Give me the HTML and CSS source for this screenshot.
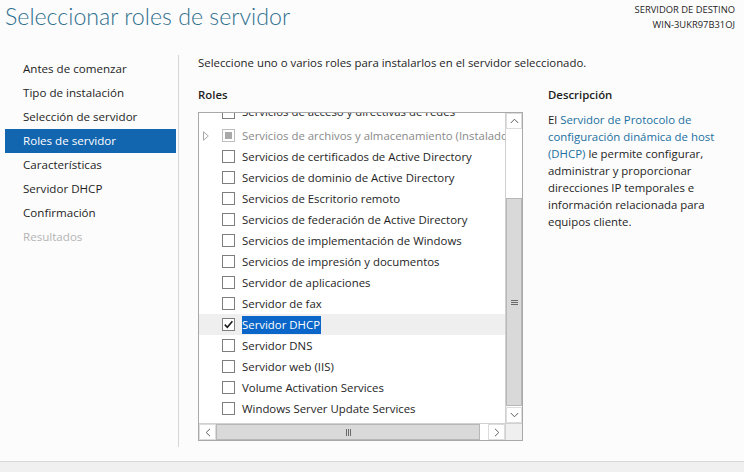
FILE: index.html
```html
<!DOCTYPE html>
<html lang="es">
<head>
<meta charset="utf-8">
<title>Seleccionar roles de servidor</title>
<link rel="stylesheet" href="styles.css">
</head>
<body>
<div class="page">
  <header class="top">
    <h1 class="title">Seleccionar roles de servidor</h1>
    <div class="dest">
      <div>SERVIDOR DE DESTINO</div>
      <div>WIN-3UKR97B31OJ</div>
    </div>
  </header>
  <div class="main">
    <nav class="nav">
      <div class="nav-item">Antes de comenzar</div>
      <div class="nav-item">Tipo de instalación</div>
      <div class="nav-item">Selección de servidor</div>
      <div class="nav-item active">Roles de servidor</div>
      <div class="nav-item">Características</div>
      <div class="nav-item">Servidor DHCP</div>
      <div class="nav-item">Confirmación</div>
      <div class="nav-item disabled">Resultados</div>
    </nav>
    <section class="content">
      <p class="intro">Seleccione uno o varios roles para instalarlos en el servidor seleccionado.</p>
      <div class="cols">
        <div class="roles">
          <h2 class="label">Roles</h2>
          <div class="listbox">
            <div class="list-area">
              <div class="viewport">
                <ul class="rows">
                  <li class="row cut"><span class="exp"></span><span class="cb"></span><span class="txt">Servicios de acceso y directivas de redes</span></li>
                  <li class="row"><span class="exp"><svg width="6" height="10" viewBox="0 0 6 10"><path d="M0.5 0.8 L5.3 5 L0.5 9.2 Z" fill="none" stroke="#a6a6a6" stroke-width="1"/></svg></span><span class="cb mixed"><span class="fill"></span></span><span class="txt muted">Servicios de archivos y almacenamiento (Instalado 2 de 12)</span></li>
                  <li class="row"><span class="exp"></span><span class="cb"></span><span class="txt">Servicios de certificados de Active Directory</span></li>
                  <li class="row"><span class="exp"></span><span class="cb"></span><span class="txt">Servicios de dominio de Active Directory</span></li>
                  <li class="row"><span class="exp"></span><span class="cb"></span><span class="txt">Servicios de Escritorio remoto</span></li>
                  <li class="row"><span class="exp"></span><span class="cb"></span><span class="txt">Servicios de federación de Active Directory</span></li>
                  <li class="row"><span class="exp"></span><span class="cb"></span><span class="txt">Servicios de implementación de Windows</span></li>
                  <li class="row"><span class="exp"></span><span class="cb"></span><span class="txt">Servicios de impresión y documentos</span></li>
                  <li class="row"><span class="exp"></span><span class="cb"></span><span class="txt">Servidor de aplicaciones</span></li>
                  <li class="row"><span class="exp"></span><span class="cb"></span><span class="txt">Servidor de fax</span></li>
                  <li class="row current"><span class="exp"></span><span class="cb"><svg width="11" height="11" viewBox="0 0 11 11"><path d="M1.8 5.6 L4.3 8.2 L9.4 2.2" fill="none" stroke="#1a1a1a" stroke-width="1.6"/></svg></span><span class="txt"><span class="sel">Servidor DHCP</span></span></li>
                  <li class="row"><span class="exp"></span><span class="cb"></span><span class="txt">Servidor DNS</span></li>
                  <li class="row"><span class="exp"></span><span class="cb"></span><span class="txt">Servidor web (IIS)</span></li>
                  <li class="row"><span class="exp"></span><span class="cb"></span><span class="txt">Volume Activation Services</span></li>
                  <li class="row"><span class="exp"></span><span class="cb"></span><span class="txt">Windows Server Update Services</span></li>
                </ul>
              </div>
              <div class="vscroll">
                <div class="sbtn"><svg width="9" height="6" viewBox="0 0 9 6"><path d="M0.8 5 L4.5 1.2 L8.2 5" fill="none" stroke="#606060" stroke-width="1"/></svg></div>
                <div class="vtrack-top"></div>
                <div class="vthumb"><svg width="7" height="7" viewBox="0 0 7 7"><path d="M0 1.5 H7 M0 3.5 H7 M0 5.5 H7" stroke="#6a6a6a" stroke-width="1"/></svg></div>
                <div class="vtrack-bottom"></div>
                <div class="sbtn"><svg width="9" height="6" viewBox="0 0 9 6"><path d="M0.8 1 L4.5 4.8 L8.2 1" fill="none" stroke="#606060" stroke-width="1"/></svg></div>
              </div>
            </div>
            <div class="hscroll">
              <div class="hbtn"><svg width="6" height="9" viewBox="0 0 6 9"><path d="M5 0.8 L1.2 4.5 L5 8.2" fill="none" stroke="#606060" stroke-width="1"/></svg></div>
              <div class="hthumb"><svg width="7" height="7" viewBox="0 0 7 7"><path d="M1.5 0 V7 M3.5 0 V7 M5.5 0 V7" stroke="#6a6a6a" stroke-width="1"/></svg></div>
              <div class="htrack"></div>
              <div class="hbtn"><svg width="6" height="9" viewBox="0 0 6 9"><path d="M1 0.8 L4.8 4.5 L1 8.2" fill="none" stroke="#606060" stroke-width="1"/></svg></div>
              <div class="corner"></div>
            </div>
          </div>
        </div>
        <aside class="desc">
          <h2 class="label">Descripción</h2>
          <p class="desc-text">El <span class="link">Servidor de Protocolo de<br>configuración dinámica de host<br>(DHCP)</span> le permite configurar,<br>administrar y proporcionar<br>direcciones IP temporales e<br>información relacionada para<br>equipos cliente.</p>
        </aside>
      </div>
    </section>
  </div>
  <footer class="bottom"></footer>
</div>
</body>
</html>
```

FILE: styles.css
```css
* { box-sizing: border-box; }

html, body {
  margin: 0;
  padding: 0;
}

body {
  font-family: "Open Sans", "Noto Sans", "Liberation Sans", sans-serif;
  font-size: 11.4px;
  color: #1e1e1e;
  background: #fcfcfc;
}

.page {
  width: 744px;
  height: 472px;
  display: flex;
  flex-direction: column;
  overflow: hidden;
}

.top {
  height: 55px;
  display: flex;
  justify-content: space-between;
  align-items: flex-start;
}

.title {
  margin: 0;
  padding: 1px 0 0 5px;
  font-family: "Lato", "Open Sans", sans-serif;
  font-size: 23.2px;
  font-weight: 300;
  color: #2f6f8e;
  line-height: 30px;
}

.dest {
  padding: 2px 9px 0 0;
  text-align: right;
  font-size: 9.4px;
  line-height: 15px;
  color: #1e1e1e;
}

.main {
  height: 392px;
  display: flex;
}

.nav {
  width: 179px;
  flex: none;
  border-right: 1px solid #d6d6d6;
  padding: 2px 2px 0 5px;
}

.nav-item {
  height: 24px;
  line-height: 24px;
  padding-left: 18px;
  font-size: 11.6px;
  white-space: nowrap;
}

.nav-item.active {
  background: #1265af;
  color: #ffffff;
}

.nav-item.disabled {
  color: #b4b4b4;
}

.content {
  flex: 1;
  padding-left: 19px;
}

.intro {
  margin: 0;
  height: 16px;
  line-height: 16px;
}

.cols {
  display: flex;
  margin-top: 16px;
}

.roles {
  width: 325px;
  flex: none;
}

.label {
  margin: 0;
  font-size: 11.4px;
  font-weight: 600;
  height: 16px;
  line-height: 16px;
  color: #1e1e1e;
}

.listbox {
  margin-top: 9px;
  width: 325px;
  height: 329px;
  border: 1px solid #a9a9a9;
  background: #ffffff;
  display: flex;
  flex-direction: column;
}

.list-area {
  height: 310px;
  display: flex;
}

.viewport {
  flex: 1;
  overflow: hidden;
}

.rows {
  list-style: none;
  margin: -9px 0 0 0;
  padding: 0;
}

.row {
  height: 21px;
  display: flex;
  align-items: center;
  padding-left: 4px;
  white-space: nowrap;
}

.row.cut {
  align-items: flex-start;
}

.row.current {
  background: #efefef;
}

.exp {
  width: 6px;
  height: 10px;
  margin-right: 13px;
  flex: none;
  display: flex;
}

.cb {
  width: 13px;
  height: 13px;
  border: 1px solid #7e7e7e;
  background: #ffffff;
  flex: none;
  display: flex;
  align-items: center;
  justify-content: center;
}

.row.cut .cb {
  margin-top: 2px;
}

.cb.mixed {
  border-color: #bdbdbd;
}

.cb .fill {
  width: 7px;
  height: 7px;
  background: #a9a9a9;
}

.txt {
  margin-left: 7px;
  line-height: 17px;
}

.row.cut .txt {
  margin-top: -1px;
}

.txt.muted {
  color: #8a8a8a;
}

.sel {
  background: #0a66c8;
  color: #ffffff;
  display: inline-block;
  padding: 0 1px 0 0;
  line-height: 18px;
}

.vscroll {
  width: 17px;
  flex: none;
  display: flex;
  flex-direction: column;
  border-left: 1px solid #d0d0d0;
  background: #ffffff;
}

.sbtn {
  height: 16px;
  flex: none;
  display: flex;
  align-items: center;
  justify-content: center;
  border: 1px solid #dcdcdc;
  background: #ffffff;
}

.vtrack-top {
  height: 69px;
  flex: none;
}

.vthumb {
  height: 208px;
  flex: none;
  background: #d9d9d9;
  border: 1px solid #b7b7b7;
  display: flex;
  align-items: center;
  justify-content: center;
}

.vtrack-bottom {
  flex: 1;
}

.hscroll {
  height: 17px;
  display: flex;
  border-top: 1px solid #d0d0d0;
}

.hbtn {
  width: 17px;
  flex: none;
  display: flex;
  align-items: center;
  justify-content: center;
  border: 1px solid #dcdcdc;
  background: #ffffff;
}

.hthumb {
  width: 264px;
  flex: none;
  background: #d9d9d9;
  border: 1px solid #b7b7b7;
  display: flex;
  align-items: center;
  justify-content: center;
}

.htrack {
  flex: 1;
}

.corner {
  width: 17px;
  flex: none;
  background: #efefef;
  border-left: 1px solid #d0d0d0;
}

.desc {
  margin-left: 25px;
  width: 190px;
  flex: none;
}

.desc-text {
  margin: 8px 0 0 0;
  line-height: 17px;
  font-size: 11.4px;
}

.link {
  color: #21709f;
}

.bottom {
  margin-top: auto;
  height: 11px;
  background: #f0f0f0;
  border-top: 1px solid #d8d8d8;
}
```
